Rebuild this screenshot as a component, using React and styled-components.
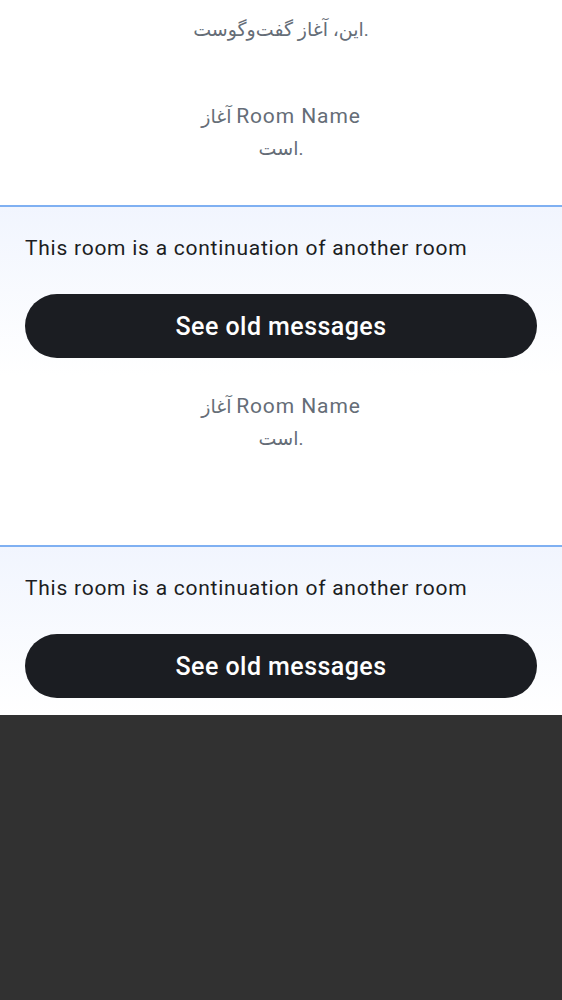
import React from 'react';
import styled, { createGlobalStyle } from 'styled-components';

const GlobalStyle = createGlobalStyle`
  html, body {
    margin: 0;
    padding: 0;
    background: #313131;
  }
  body {
    font-family: Roboto, "Noto Sans", "DejaVu Sans", sans-serif;
    -webkit-font-smoothing: antialiased;
  }
`;

const Timeline = styled.div`
  background: #ffffff;
  display: flex;
  flex-direction: column;
`;

const Section = styled.div`
  display: flex;
  flex-direction: column;
  align-items: center;
  padding: ${p => p.$pad || '0'};
`;

const Hint = styled.p`
  margin: 0;
  max-width: ${p => p.$narrow ? '200px' : 'none'};
  text-align: center;
  color: #656d77;
  font-size: 19px;
  line-height: 32px;
`;

const RoomName = styled.span`
  font-size: 21px;
  letter-spacing: 0.9px;
`;

const Notice = styled.div`
  border-top: 2px solid #7fb0f2;
  background: linear-gradient(180deg, #f1f5fe 0%, #ffffff 100%);
  padding: 27px 25px 17px;
  display: flex;
  flex-direction: column;
  gap: 32px;
`;

const NoticeText = styled.p`
  margin: 0;
  font-size: 21px;
  letter-spacing: 0.75px;
  line-height: 28px;
  color: #1b1d22;
`;

const OldButton = styled.button`
  height: 64px;
  border: none;
  border-radius: 32px;
  background: #1b1d22;
  color: #ffffff;
  font-family: inherit;
  font-size: 25px;
  letter-spacing: 0.45px;
  font-weight: 500;
  cursor: pointer;
`;

const Block = styled.div`
  background: #ffffff;
`;

const ContinuationNotice = () => (
  <Notice>
    <NoticeText>This room is a continuation of another room</NoticeText>
    <OldButton>See old messages</OldButton>
  </Notice>
);

const RoomStart = () => (
  <Hint $narrow>
    آغاز <RoomName>Room Name</RoomName> است.
  </Hint>
);

export default function App() {
  return (
    <>
      <GlobalStyle />
      <Timeline>
        <Section $pad="14px 0 54px">
          <Hint>این، آغاز گفت‌وگوست.</Hint>
        </Section>
        <Section $pad="0 0 40px">
          <RoomStart />
        </Section>
        <Block>
          <ContinuationNotice />
          <Section $pad="15px 0 90px">
            <RoomStart />
          </Section>
        </Block>
        <ContinuationNotice />
      </Timeline>
    </>
  );
}
